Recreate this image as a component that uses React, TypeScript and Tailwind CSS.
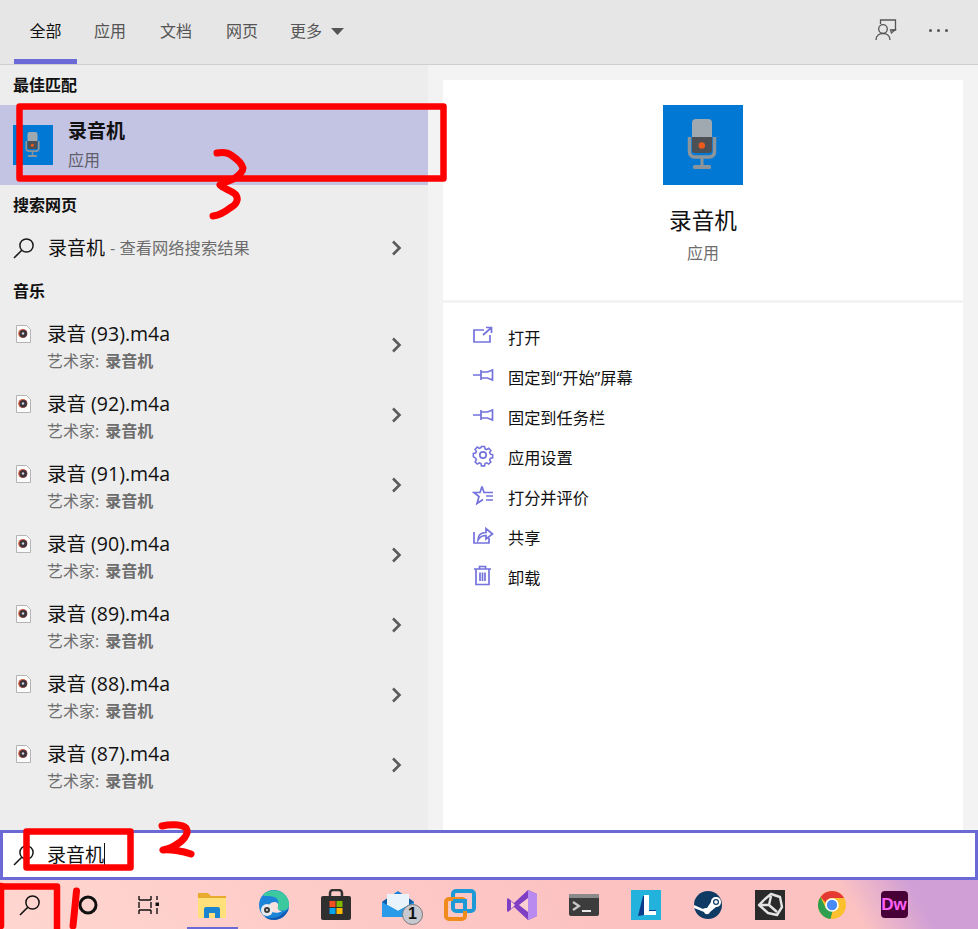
import React from "react";

const ACCENT = "#7472dc";

function MicIcon({ size }: { size: number }) {
  return (
    <svg width={size} height={size} viewBox="0 0 80 80" className="shrink-0 block">
      <rect width="80" height="80" fill="#0078d4" />
      <path d="M26.500 32v15a5 5 0 0 0 5 5h15a5 5 0 0 0 5-5V32" fill="none" stroke="#8d959b" strokeWidth="3.500" />
      <path d="M29 32V18a4 4 0 0 1 4-4h12a4 4 0 0 1 4 4v14z" fill="#a0a8b0" />
      <path d="M29 32h20v13a3 3 0 0 1-3 3H32a3 3 0 0 1-3-3z" fill="#4c5054" />
      <circle cx="38.800" cy="40.500" r="3.200" fill="#ee5a1e" />
      <rect x="37.500" y="53" width="3" height="8" fill="#8d959b" />
      <rect x="30" y="60" width="18" height="4" rx="1.500" fill="#8d959b" />
    </svg>
  );
}

function SearchGlass({ size = 22, color = "#1a1a1a" }: { size?: number; color?: string }) {
  return (
    <svg width={size} height={size} viewBox="0 0 22 22" className="shrink-0 block">
      <circle cx="13.500" cy="8.500" r="6.600" fill="none" stroke={color} strokeWidth="1.500" />
      <path d="M8.800 13.200 1 21" fill="none" stroke={color} strokeWidth="1.600" />
    </svg>
  );
}

function Chevron() {
  return (
    <svg width="11" height="16" viewBox="0 0 11 16" className="shrink-0 block">
      <path d="M2 1.500 8.500 8 2 14.500" fill="none" stroke="#5b5b5b" strokeWidth="2.600" />
    </svg>
  );
}

function MusicFile() {
  return (
    <svg width="15" height="18" viewBox="0 0 15 18" className="shrink-0 block">
      <path d="M.5.5h10l4 4v13H.5z" fill="#fbfbfb" stroke="#b4b4b4" />
      <circle cx="6.800" cy="8.500" r="4.600" fill="#c85a3c" />
      <circle cx="7.300" cy="8.700" r="3.700" fill="#3a3440" />
      <circle cx="7" cy="8.500" r="1.200" fill="#d8d8d8" />
    </svg>
  );
}

function Heading({ children }: { children: React.ReactNode }) {
  return <div className="h-[40px] pl-[13px] flex items-center text-[16px] font-bold text-[#111]">{children}</div>;
}

function MusicRow({ n }: { n: number }) {
  return (
    <div className="h-[70px] flex pl-[16px] pr-[26px]">
      <div className="w-[31px] pt-[14px]"><MusicFile /></div>
      <div className="flex-1 pt-[9px]">
        <div className="text-[19.5px] leading-[28px] text-[#111]">录音 ({n}).m4a</div>
        <div className="text-[16px] leading-[26px] text-[#6d6d6d]">艺术家:<span className="ml-[6px] font-bold">录音机</span></div>
      </div>
      <div className="flex items-center pb-[3px]"><Chevron /></div>
    </div>
  );
}

const stroke = { fill: "none", stroke: ACCENT, strokeWidth: 1.7 };

const pin = "M0 10h8M8 5v10M8 7h6.500L19.500 5v10l-5-2H8";

const actionIcons: React.ReactNode[] = [
  <path key="o" {...stroke} d="M11 5H1v12h16v-7M10 10l8-7M13 2.500h5.500V8" />,
  <path key="p1" {...stroke} d={pin} />,
  <path key="p2" {...stroke} d={pin} />,
  <g key="g" {...stroke}>
    <circle cx="10" cy="10" r="3.200" />
    <path d="M8.300 0.800h3.400l.5 2.500 1.800.8 2.200-1.400 2.400 2.400-1.400 2.200.8 1.800 2.500.5v3.400l-2.500.5-.8 1.800 1.400 2.200-2.400 2.400-2.200-1.400-1.800.8-.5 2.500H8.300l-.5-2.500-1.800-.8-2.200 1.400-2.400-2.400 1.400-2.200-.8-1.800L-.5 11.700V8.300l2.500-.5.8-1.800L1.400 3.800l2.400-2.400L6 2.800l1.800-.8z" transform="translate(.8 .8) scale(.92)" />
  </g>,
  <path key="s" {...stroke} d="M9 1.500 11 7.500H20M13 11h7M13 15h7M9 1.500 7 7.500H1l5 4-2 7 6-4" />,
  <path key="sh" {...stroke} d="M1 7v11h15v-5M5 15c0-5 3-7.500 8-7.500V3.500l6.500 5.500-6.500 5v-3.500c-4 0-6 1-8 4.500z" />,
  <path key="t" {...stroke} d="M1 4h17M6.500 4V1.500h6V4M3 4v15.500h13V4M7 7.500v8.500M9.500 7.500v8.500M12 7.500v8.500" />,
];

const actions = ["打开", "固定到“开始”屏幕", "固定到任务栏", "应用设置", "打分并评价", "共享", "卸载"];

function Slot({ w = 62, active, children }: { w?: number; active?: boolean; children: React.ReactNode }) {
  return (
    <div className="relative h-full shrink-0 flex items-center justify-center" style={{ width: w }}>
      {children}
      {active && <div className="absolute bottom-0 left-[6px] w-[51px] h-[2px] bg-[#6b69d6]" />}
    </div>
  );
}

function TaskIcon({ children }: { children: React.ReactNode }) {
  return (
    <svg width="32" height="32" viewBox="0 0 32 32" className="block">
      {children}
    </svg>
  );
}

export default function App() {
  return (
    <div className="relative w-[978px] h-[929px] overflow-hidden flex flex-col bg-[#f3f3f3] text-[#111] font-['Open_Sans','Noto_Sans_CJK_SC',sans-serif]">
      {/* Header */}
      <div className="h-[65px] shrink-0 flex items-stretch pl-[14px] pr-[33px] bg-[#e6e6e6] border-b border-[#cfcfcf]">
        <div className="flex gap-[4px] text-[16px] text-[#555]">
          <div className="w-[63px] -mr-[2px] h-full flex items-center justify-center pt-[3px] text-[#111] border-b-[5px] border-[#6b69d6]">全部</div>
          <div className="w-[62px] flex items-center justify-center pb-[2px]">应用</div>
          <div className="w-[62px] flex items-center justify-center pb-[2px]">文档</div>
          <div className="w-[62px] flex items-center justify-center pb-[2px]">网页</div>
          <div className="pl-[13px] flex items-center gap-[9px] pb-[2px]">
            更多
            <svg width="13" height="7" viewBox="0 0 13 7" className="block"><path d="M0 0h13L6.500 7z" fill="#555" /></svg>
          </div>
        </div>
        <div className="ml-auto flex items-center gap-[32px] pb-[4px]">
          <svg width="22" height="22" viewBox="0 0 22 22" className="block">
            <g fill="none" stroke="#555" strokeWidth="1.300">
              <path d="M5.500 5V1h15v10h-3" />
              <path d="M20 11h-4.500l1 3z" />
              <circle cx="8" cy="10" r="4.300" />
              <path d="M1 21c0-4 3-6.500 7-6.500s7 2.500 7 6.500" />
            </g>
          </svg>
          <div className="flex gap-[5px] w-[16px]">
            <div className="w-[3px] h-[3px] rounded-full bg-[#555] shrink-0" />
            <div className="w-[3px] h-[3px] rounded-full bg-[#555] shrink-0" />
            <div className="w-[3px] h-[3px] rounded-full bg-[#555] shrink-0" />
          </div>
        </div>
      </div>

      {/* Main */}
      <div className="h-[765px] shrink-0 flex">
        <div className="w-[428px] shrink-0 bg-[#ededed]">
          <Heading>最佳匹配</Heading>
          <div className="h-[80px] bg-[#c3c3e4] flex items-center pl-[13px]">
            <MicIcon size={40} />
            <div className="ml-[15px]">
              <div className="text-[19px] leading-[28px] font-bold text-[#111]">录音机</div>
              <div className="mt-[1px] text-[16px] leading-[28px] text-[#5f5f6b]">应用</div>
            </div>
          </div>
          <Heading>搜索网页</Heading>
          <div className="h-[46px] flex items-center pl-[13px] pr-[26px]">
            <SearchGlass />
            <span className="ml-[13px] text-[19px] text-[#111]">录音机</span>
            <span className="ml-[5px] text-[16.3px] text-[#6d6d6d]">- 查看网络搜索结果</span>
            <span className="ml-auto"><Chevron /></span>
          </div>
          <Heading>音乐</Heading>
          {[93, 92, 91, 90, 89, 88, 87].map((n) => <MusicRow key={n} n={n} />)}
        </div>
        <div className="flex-1 flex px-[15px] pt-[15px]">
          <div className="flex-1 flex flex-col bg-white">
            <div className="h-[220px] shrink-0 flex flex-col items-center pt-[25px]">
              <MicIcon size={80} />
              <div className="mt-[20px] text-[22.67px] leading-[32px] text-[#111]">录音机</div>
              <div className="mt-[4px] text-[16px] leading-[24px] text-[#6d6d6d]">应用</div>
            </div>
            <div className="h-[3px] shrink-0 bg-[#f3f3f3]" />
            <div className="pt-[15px] pl-[30px]">
              {actions.map((a, i) => (
                <div key={a} className="h-[40px] flex items-center">
                  <svg width="20" height="20" viewBox="0 0 20 20" className="block shrink-0 mb-[7px] overflow-visible">{actionIcons[i]}</svg>
                  <span className="ml-[15px] text-[16.2px] text-[#111]">{a}</span>
                </div>
              ))}
            </div>
          </div>
        </div>
      </div>

      {/* Search box */}
      <div className="h-[50px] shrink-0 flex items-center pl-[10px] bg-white border-[3px] border-[#6b69d6]">
        <SearchGlass />
        <span className="ml-[12px] text-[19px] text-[#111]">录音机</span>
        <span className="w-px h-[24px] bg-[#111]" />
      </div>

      {/* Taskbar */}
      <div className="h-[49px] shrink-0 flex bg-[linear-gradient(60deg,#ffd6d0_0%,#fcc2c2_60%,#fcc2c2_86%,#d09fd6_93%)]">
        <Slot w={59}><SearchGlass size={22} color="#111" /></Slot>
        <Slot w={58}>
          <svg width="20" height="20" viewBox="0 0 20 20" className="block"><circle cx="10" cy="10" r="8" fill="none" stroke="#111" strokeWidth="3" /></svg>
        </Slot>
        <Slot w={64}>
          <svg width="22" height="20" viewBox="0 0 22 20" className="block">
            <path d="M1 1v4M13 1v4M1 15v4M13 15v4M1 5h12M1 15h12M1 7v6M13 7v6" fill="none" stroke="#111" strokeWidth="1.400" />
            <path d="M19 1v4M19 13v6" fill="none" stroke="#111" strokeWidth="1.400" />
            <rect x="17.500" y="7.500" width="3.500" height="3.500" fill="#111" />
          </svg>
        </Slot>
        <Slot active>
          <TaskIcon>
            <path d="M2 4h10l3 3h15v22H2z" fill="#e8ab2e" />
            <rect x="2" y="9" width="28" height="20" fill="#ffe07a" />
            <path d="M8 29V20a2 2 0 0 1 2-2h12a2 2 0 0 1 2 2v9h-5v-5h-6v5z" fill="#1a84cf" />
          </TaskIcon>
        </Slot>
        <Slot>
          <TaskIcon>
            <circle cx="16" cy="16" r="15" fill="#1b84d8" />
            <path d="M5 6C9 1 22-1 28 7c3 4 4 9 2 12-2 3-6 3-9 2-2-1-2-3-1-5 1-3 0-7-4-8-5-2-10 0-11-2z" fill="#3cc9a0" />
            <path d="M31 19c-2 7-8 12-15 12-4 0-7-1-9-3 6 2 14 1 17-3 2-2 5-3 7-6z" fill="#0f5ab0" />
            <path d="M13 14c3-2 8-1 7 3-1 3 1 5 4 5-4 3-11 2-13-2-1-2 0-5 2-6z" fill="#fde0dc" />
            <circle cx="9" cy="21" r="6" fill="#eaeaea" />
            <circle cx="9" cy="21" r="3" fill="#3b3b3b" />
            <circle cx="9" cy="21" r="1.100" fill="#ddd" />
          </TaskIcon>
        </Slot>
        <Slot>
          <TaskIcon>
            <path d="M10 9V4a3 3 0 0 1 3-3h6a3 3 0 0 1 3 3v5" fill="none" stroke="#333" strokeWidth="2.500" />
            <rect x="1" y="7" width="30" height="24" rx="2" fill="#2f2f2f" />
            <rect x="9.500" y="12" width="6" height="6" fill="#f25022" />
            <rect x="16.500" y="12" width="6" height="6" fill="#7fba00" />
            <rect x="9.500" y="19" width="6" height="6" fill="#00a4ef" />
            <rect x="16.500" y="19" width="6" height="6" fill="#ffb900" />
          </TaskIcon>
        </Slot>
        <Slot>
          <div className="relative">
            <TaskIcon>
              <path d="M0 13 16 2l16 11v15H0z" fill="#1a7fd0" />
              <path d="M5 5h22v11l-11 6-11-6z" fill="#e8f3fb" />
              <path d="M0 13 5 9.500V16zM32 13l-5-3.500V16z" fill="#0f5ea8" />
              <path d="M0 13v15h32V13L16 22z" fill="#2a9be8" />
            </TaskIcon>
            <div className="absolute right-[-9px] bottom-[-4px] w-[21px] h-[21px] rounded-full bg-[#c8c8d0] border border-[#777] flex items-center justify-center text-[16px] font-bold text-[#111] font-['Liberation_Sans',sans-serif]">1</div>
          </div>
        </Slot>
        <Slot>
          <TaskIcon>
            <rect x="9" y="2" width="21" height="20" rx="3" fill="none" stroke="#1d9ad6" strokeWidth="4" />
            <rect x="2" y="10" width="19" height="20" rx="3" fill="none" stroke="#f08c1e" strokeWidth="4" />
            <path d="M9 12h12v10" fill="none" stroke="#1d9ad6" strokeWidth="4" />
          </TaskIcon>
        </Slot>
        <Slot>
          <TaskIcon>
            <path d="M22 1 31 5v22l-9 4L8 18l-6 5-1-1V10l1-1 6 5z" fill="#7e3fc4" />
            <path d="M22 1 31 5v22l-9 4z" fill="#b98af0" />
            <path d="M22 9v14l-9-7z" fill="#fbd0d0" />
            <path d="M5 12v8l4-4z" fill="#fbd0d0" />
          </TaskIcon>
        </Slot>
        <Slot>
          <TaskIcon>
            <rect x="1" y="5" width="30" height="22" rx="2" fill="#3c3c3c" />
            <rect x="1" y="5" width="30" height="4" rx="1" fill="#8a8a8a" />
            <path d="m5 13 6 4-6 4" fill="none" stroke="#c8c8c8" strokeWidth="2.200" />
            <path d="M14 22h9" stroke="#e8e8e8" strokeWidth="2" />
          </TaskIcon>
        </Slot>
        <Slot>
          <TaskIcon>
            <rect x="1" y="1" width="30" height="30" fill="#22b2db" />
            <path d="M8 27 13 7h5v14h8v5H14z" fill="#0a3a8c" />
            <path d="M14 6h5v16h7v4H14z" fill="#fff" />
          </TaskIcon>
        </Slot>
        <Slot>
          <TaskIcon>
            <circle cx="16" cy="16" r="14" fill="#0f3a63" />
            <path d="M2 19 12 23c1 3 5 3 6 0l6-5c3 0 5-2 5-5 0-3-2-5-5-5s-5 2-5 5l-4 6c-2 0-3 0-4 1L2 16z" fill="#fff" />
            <circle cx="24" cy="13" r="3" fill="#0f3a63" />
            <circle cx="24" cy="13" r="1.800" fill="#fff" />
          </TaskIcon>
        </Slot>
        <Slot>
          <TaskIcon>
            <rect x="1" y="1" width="30" height="30" fill="#2a2a2a" />
            <path d="M17 5 26 8 28 18 23 26 14 24 5 16 11 10zM15 16 17 7M15 16H7M15 16 23 23" fill="none" stroke="#e4e4e4" strokeWidth="2.400" strokeLinejoin="round" />
          </TaskIcon>
        </Slot>
        <Slot>
          <TaskIcon>
            <circle cx="16" cy="16" r="14" fill="#fbc02d" />
            <path d="M16 2a14 14 0 0 1 12.100 7H16a7 7 0 0 0-6.500 4.500L4.500 8A14 14 0 0 1 16 2z" fill="#e53935" />
            <path d="M4.500 8 10 19.500l7 .5L14.500 30A14 14 0 0 1 4.500 8z" fill="#2e9e4f" />
            <circle cx="16" cy="16" r="6.800" fill="#fff" />
            <circle cx="16" cy="16" r="5.200" fill="#4a8af4" />
          </TaskIcon>
        </Slot>
        <Slot>
          <div className="w-[27px] h-[27px] rounded-[4px] bg-[#470137] flex items-center justify-center text-[17px] leading-none font-bold text-[#ff61f6] font-['Liberation_Sans',sans-serif]">Dw</div>
        </Slot>
      </div>

      {/* Hand-drawn red annotations over the screenshot */}
      <svg width="978" height="929" viewBox="0 0 978 929" className="absolute inset-0 pointer-events-none">
        <g fill="none" stroke="#ff0000" strokeWidth="6.500" strokeLinejoin="round" strokeLinecap="round">
          <rect x="19.500" y="106.500" width="424" height="72" />
          <rect x="26.500" y="831.500" width="104" height="36" />
          <path d="M2 886.500h55v50" />
          <path d="M1 886v40" />
          <path d="M76.500 891 73 926" strokeWidth="7" />
          <path d="M162 826c8-2 20-2 24 2 4 6-4 14-12 18-6 4-10 3-11 4 6-1 20 1 28 4" strokeWidth="7" />
          <path d="M217 153c5-1 10-1 14 2 6 4 11 9 12 13 0 4-4 7-8 10-4 3-9 3-15 7 3 4 12 5 16 10 3 5 0 10-6 13-5 4-10 7-17 8" strokeWidth="7" />
        </g>
      </svg>
    </div>
  );
}
